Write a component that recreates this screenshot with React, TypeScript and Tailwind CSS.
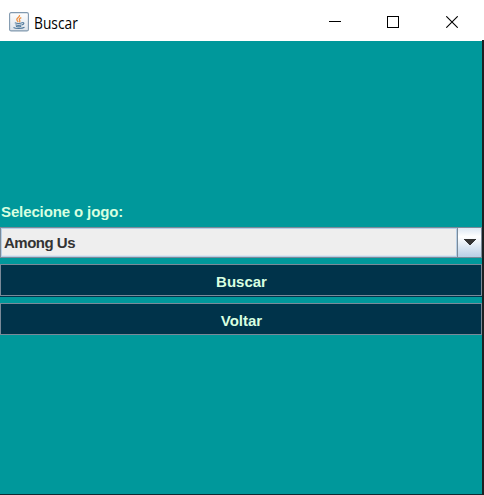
function JavaIcon() {
  return (
    <svg width="20" height="20" viewBox="0 0 20 20" className="shrink-0">
      <defs>
        <linearGradient id="tile" x1="0" y1="0" x2="0" y2="1">
          <stop offset="0" stopColor="#ffffff" />
          <stop offset="1" stopColor="#dce3ea" />
        </linearGradient>
      </defs>
      <rect x=".6" y=".6" width="18.8" height="18.3" rx="1.5" fill="url(#tile)" stroke="#8199af" strokeWidth="1.1" />
      <path d="M10.500 3c.8 1.800-2.700 2.700-2.700 4.500 0 1 1 1.600 1.300 2.700M12.300 5.700c-1.800.9-2.500 1.700-1.600 2.800.5.700.2 1.200-.4 1.800" fill="none" stroke="#ee9142" strokeWidth="1.300" />
      <path d="M5.800 10.800c1.700.6 5.800.6 7.400 0M6.500 12.700c1.500.7 4.700.7 6.200 0M7 14.300c1.300.6 4 .6 5.200 0M13.300 10.600c2-.5 2.300 1.600-.2 2.300M4.500 15.500c2 1.300 8.500 1.300 11-.2" fill="none" stroke="#50799b" strokeWidth="1.100" />
    </svg>
  );
}

function TitleBar() {
  return (
    <header className="flex h-[41px] shrink-0 items-center bg-white pl-[9px] text-black">
      <div className="mt-[2px] flex"><JavaIcon /></div>
      <h1 className="ml-[5px] mt-[4px] w-[60px] origin-left scale-x-[0.89] font-['Open_Sans',sans-serif] text-[15.5px] leading-5">Buscar</h1>
      <div className="ml-auto mr-[26px] mt-[3px] flex">
        <svg width="12" height="12" className="mr-[46px]" shapeRendering="crispEdges"><path d="M0 5.500h12" stroke="#000" /></svg>
        <svg width="12" height="12" className="mr-[47px]" shapeRendering="crispEdges"><rect x=".5" y=".5" width="11" height="11" fill="none" stroke="#000" /></svg>
        <svg width="12" height="12"><path d="M.3.3l11.400 11.400M11.700.3L.3 11.700" stroke="#000" strokeWidth="1.100" /></svg>
      </div>
    </header>
  );
}

function Action({ label, className }: { label: string; className: string }) {
  return (
    <button className={`block w-full border border-[#7a8a99] bg-[#00334a] pt-[3px] pl-px text-center text-[15px] leading-[27px] font-bold text-[#d8ffe0] ${className}`}>
      {label}
    </button>
  );
}

export default function App() {
  return (
    <div className="flex h-[495px] w-[484px] flex-col overflow-hidden bg-white font-['Liberation_Sans',Arial,sans-serif]">
      <TitleBar />
      <div className="-mt-px flex h-[455px] justify-end">
        <main className="mt-px w-[482px] border-b border-[#102a32] bg-[#00989b] pt-[161px]">
          <label className="block h-[25px] pl-px text-[15px] leading-5 font-bold tracking-[-0.12px] text-[#d8ffe0]">Selecione o jogo:</label>
          <div className="flex h-[31px] border border-[#7a8a99]">
            <div className="flex-1 border border-[#b8cfe5] bg-[#eeeeee] pl-[2px] text-[15px] leading-[28px] font-bold tracking-[-0.5px] text-[#333333] shadow-[inset_0_-1px_0_#dce6ef]">Among Us</div>
            <div className="flex w-[24px] items-center justify-center border-l border-[#7a8a99] bg-linear-to-b from-[#dde8f3] via-white via-30% to-[#b8cfe5]">
              <svg width="12" height="6" shapeRendering="crispEdges" className="-mt-px"><path d="M0 0h12v1h-1v1h-1v1h-1v1h-1v1h-1v1h-2v-1h-1v-1h-1v-1h-1v-1h-1v-1h-1z" fill="#333" /></svg>
            </div>
          </div>
          <Action label="Buscar" className="mt-[6px] h-8 shadow-[0_1px_0_#00334a]" />
          <Action label="Voltar" className="mt-[7px] h-8" />
        </main>
        <div className="w-[2px] bg-[#1c2022]" />
      </div>
    </div>
  );
}
